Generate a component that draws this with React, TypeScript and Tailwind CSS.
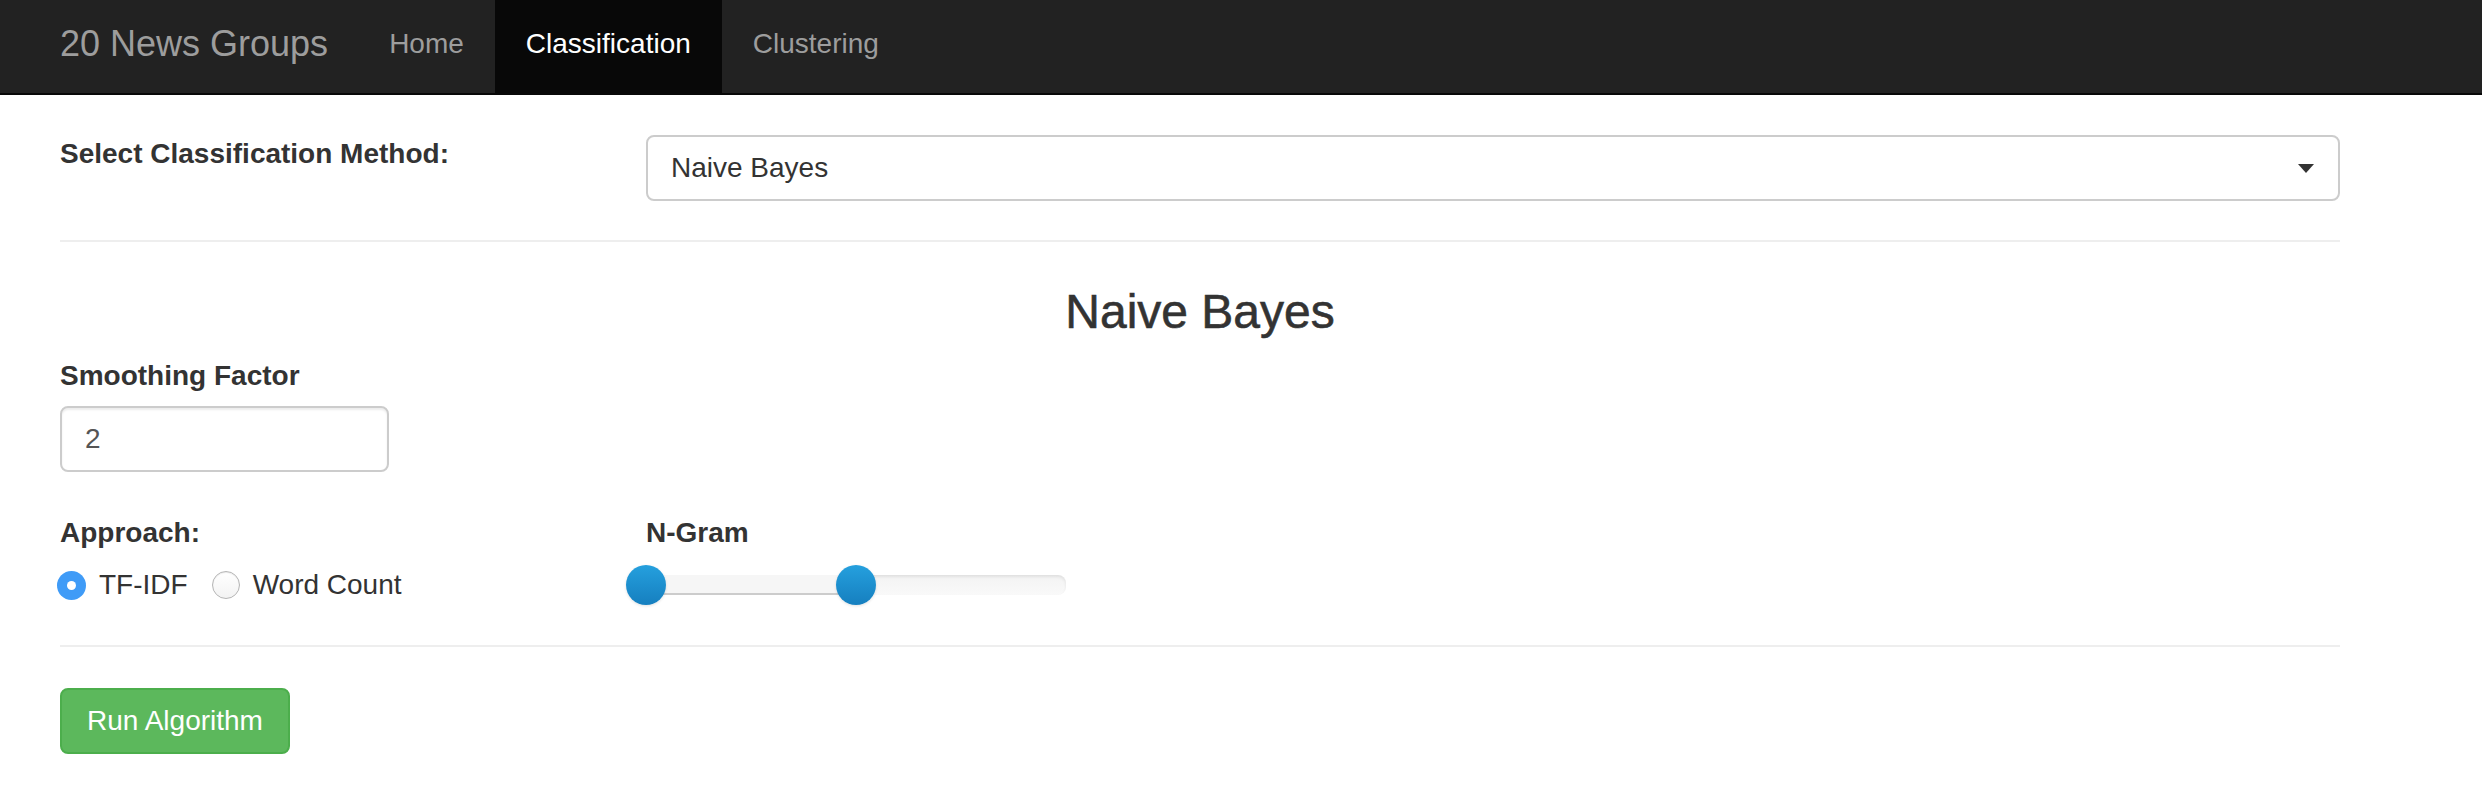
import { useState } from "react";

const links = ["Home", "Classification", "Clustering"];

function Radio({ checked, label, onClick }: { checked: boolean; label: string; onClick: () => void }) {
    return (
        <label className="flex items-center cursor-pointer" onClick={onClick}>
            {checked ? (
                <span className="w-[29px] h-[29px] rounded-full bg-[#3f9bf7] flex items-center justify-center">
                    <span className="w-[9px] h-[9px] rounded-full bg-white" />
                </span>
            ) : (
                <span className="w-[28px] h-[28px] rounded-full border border-[#b5b5b5] bg-gradient-to-b from-white to-[#f3f3f3] shadow-[inset_0_1px_1px_rgba(0,0,0,0.08)]" />
            )}
            <span className="ml-[13px]">{label}</span>
        </label>
    );
}

export default function App() {
    const [approach, setApproach] = useState<"tfidf" | "count">("tfidf");

    return (
        <div className="min-h-screen bg-white text-[#333] font-['Liberation_Sans',Arial,sans-serif]">
            <nav className="h-[95px] bg-[#222] border-b-2 border-[#080808] flex pl-[30px]">
                <a className="px-[30px] pb-[5px] flex items-center text-[36px] text-[#9d9d9d]">20 News Groups</a>
                {links.map(l => (
                    <a
                        key={l}
                        className={
                            l === "Classification"
                                ? "px-[31px] pb-[5px] flex items-center text-[28px] bg-[#080808] text-white"
                                : "px-[31px] pb-[5px] flex items-center text-[28px] text-[#9d9d9d]"
                        }
                    >
                        {l}
                    </a>
                ))}
            </nav>

            <div className="ml-[60px] w-[2280px]">
                <div className="flex mt-[40px]">
                    <div className="w-[586px] font-bold text-[28px] leading-[38px]">Select Classification Method:</div>
                    <div className="flex-1 h-[66px] border-2 border-[#ccc] rounded-[8px] pl-[23px] pr-[24px] flex items-center justify-between text-[28px]">
                        <span>Naive Bayes</span>
                        <svg width="16" height="9" viewBox="0 0 16 9">
                            <polygon points="0,0 16,0 8,9" fill="#333" />
                        </svg>
                    </div>
                </div>

                <div className="mt-[39px] h-[2px] bg-[#eee]" />

                <h3 className="mt-[43px] text-center text-[48px] leading-[53px] [-webkit-text-stroke:0.6px_#333]">Naive Bayes</h3>

                <div className="mt-[19px] font-bold text-[28px] leading-[38px]">Smoothing Factor</div>
                <div className="mt-[11px] w-[329px] h-[66px] border-2 border-[#ccc] rounded-[8px] px-[23px] flex items-center text-[28px] text-[#555] shadow-[inset_0_2px_2px_rgba(0,0,0,0.075)]">
                    2
                </div>

                <div className="flex mt-[42px]">
                    <div className="w-[586px]">
                        <div className="font-bold text-[28px] leading-[38px]">Approach:</div>
                        <div className="mt-[14px] h-[38px] flex items-center gap-[24px] text-[28px] ml-[-3px]">
                            <Radio checked={approach === "tfidf"} label="TF-IDF" onClick={() => setApproach("tfidf")} />
                            <Radio checked={approach === "count"} label="Word Count" onClick={() => setApproach("count")} />
                        </div>
                    </div>
                    <div>
                        <div className="font-bold text-[28px] leading-[38px]">N-Gram</div>
                        <div className="relative mt-[23px] w-[420px] h-[20px] rounded-[8px] bg-gradient-to-b from-[#f3f3f3] to-[#f9f9f9] shadow-[inset_0_2px_3px_rgba(0,0,0,0.08)]">
                            <div className="absolute left-0 top-0 h-[20px] w-[210px] bg-[#f6f6f6] shadow-[inset_0_-2px_0_rgba(0,0,0,0.17)]" />
                            <div className="absolute left-[-20px] top-[-10px] w-[40px] h-[40px] rounded-full bg-gradient-to-b from-[#25a0de] to-[#167fbf] shadow-[0_1px_3px_rgba(0,0,0,0.12)]" />
                            <div className="absolute left-[190px] top-[-10px] w-[40px] h-[40px] rounded-full bg-gradient-to-b from-[#25a0de] to-[#167fbf] shadow-[0_1px_3px_rgba(0,0,0,0.12)]" />
                        </div>
                    </div>
                </div>

                <div className="mt-[41px] h-[2px] bg-[#eee]" />

                <button className="mt-[41px] w-[230px] h-[66px] rounded-[8px] bg-[#5cb85c] border-2 border-[#4cae4c] text-white text-[28px]">
                    Run Algorithm
                </button>
            </div>
        </div>
    );
}
